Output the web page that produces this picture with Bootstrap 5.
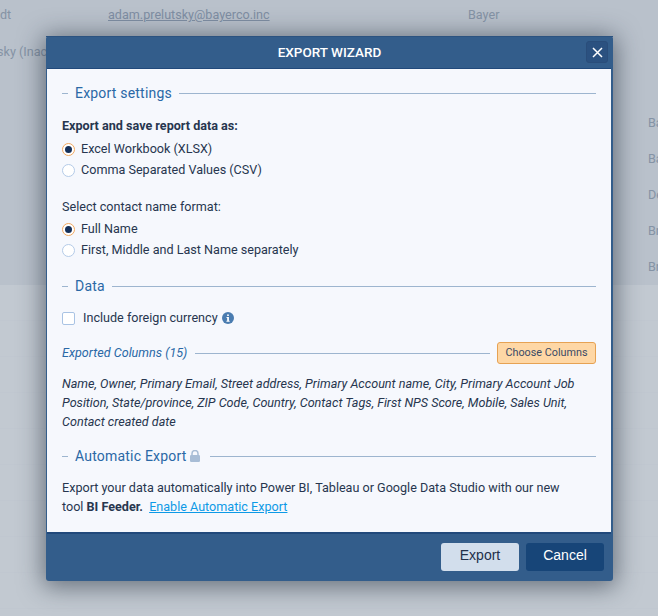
<!DOCTYPE html>
<html lang="en">
<head>
  <meta charset="UTF-8">
  <title>Export Wizard</title>
  <meta name="viewport" content="width=device-width, initial-scale=1">
  <link href="https://cdn.jsdelivr.net/npm/bootstrap@5.3.3/dist/css/bootstrap.min.css" rel="stylesheet">
  <style>
    html, body { height: 100%; }
    body { font-family: Roboto, "Liberation Sans", sans-serif; font-size: 12.6px; color: #27364f; background: #bac2cc; overflow: hidden; position: relative; }

    /* dimmed page behind the dialog */
    .page-top { height: 285px; background: #b9c1cb; color: #8593a5; position: relative; }
    .page-bottom { height: 331px; background: repeating-linear-gradient(#c2c9d1 0 35px, #c0c7d0 35px 36px); }
    .bg-text { position: absolute; line-height: 16px; white-space: nowrap; }
    .bg-text a { color: #7f8ea3; }
    .bg-email { left: 108px; top: 7px; }
    .bg-dt { left: 0; top: 7px; }
    .bg-sky { left: -3px; top: 44px; }
    .bg-bayer { left: 468px; top: 7px; }
    .bg-r1 { left: 648px; top: 115px; }
    .bg-r2 { left: 648px; top: 151px; }
    .bg-r3 { left: 648px; top: 187px; }
    .bg-r4 { left: 648px; top: 223px; }
    .bg-r5 { left: 648px; top: 259px; }

    /* dialog */
    .wizard { position: absolute; left: 46px; top: 36px; width: 567px; height: 545px; display: flex; flex-direction: column; background: #335d8b; border-radius: 3px; box-shadow: 0 3px 24px 3px rgba(30, 40, 55, .55); }
    .wizard-head { height: 32px; flex: none; position: relative; display: flex; align-items: center; justify-content: center; border-top: 1px solid #2c5380; color: #fff; font-size: 13.5px; font-weight: 500; }
    .wizard-close { position: absolute; right: 5px; top: 4px; width: 22px; height: 22px; padding: 0; display: flex; align-items: center; justify-content: center; background: #2b5180; border: 1px solid #2a4d7a; border-radius: 3px; }
    .wizard-body { flex: none; height: 466px; margin: 0 2px 0 1px; padding: 14px 15px 0 15px; background: #f6f8fd; border-top: 1px solid #21497b; border-bottom: 2px solid #21497b; }
    .wizard-foot { flex: 1; padding: 9px 9px 0 0; display: flex; justify-content: flex-end; gap: 7px; }
    .wizard-foot .btn { width: 78px; height: 28px; padding: 0 0 3px; font-size: 14px; font-family: "Liberation Sans", sans-serif; border: 0; border-radius: 3px; }
    .btn-pale { background: #d2deec; color: #22304a; }
    .btn-navy { background: #174578; color: #fff; }

    /* section legend: short dash, title, long rule */
    .legend-row { display: flex; align-items: center; color: #2a68a6; font-size: 14px; line-height: 20px; letter-spacing: .2px; }
    .legend-row::before { content: ""; width: 6px; height: 1px; background: #9db5cf; margin-right: 7px; }
    .legend-row::after { content: ""; flex: 1; height: 1px; background: #9db5cf; margin-left: 7px; }
    .legend-lock { margin: 0 3px 0 3px; }
    .gap-data { margin-top: 15px; }
    .gap-auto { margin-top: 15.5px; }

    .set-label { line-height: 16px; }
    .set-first { margin-top: 15px; }
    .set-second { margin-top: 18px; }
    .opt { display: flex; align-items: center; height: 22px; }
    .opt-first { margin-top: 5px; height: 20px; }
    .opt-second { margin-top: 4px; height: 20px; }
    .opt-dot { width: 13px; height: 13px; border-radius: 50%; border: 1px solid #b4cbe8; background: #fff; margin-right: 6px; flex: none; display: flex; align-items: center; justify-content: center; }
    .opt-dot.is-on { border-color: #f0a860; }
    .opt-dot.is-on::after { content: ""; width: 7px; height: 7px; border-radius: 50%; background: #15305a; }
    .opt-tick { margin-top: 11px; }
    .tick-box { width: 13px; height: 13px; border: 1px solid #a9c3e4; border-radius: 2px; background: #fff; margin-right: 8px; flex: none; }
    .info-dot { margin-left: 4px; }

    .cols-row { display: flex; align-items: center; height: 22px; margin-top: 13px; }
    .cols-title { font-style: italic; color: #2a68a6; }
    .cols-rule { flex: 1; height: 1px; background: #9db5cf; margin: 0 7px 0 8px; }
    .btn-choose { width: 99px; height: 22px; padding: 0; font-size: 10.8px; font-family: Roboto, sans-serif; color: #3a4a66; background: #fed7a5; border: 1px solid #e6a253; border-radius: 3px; }
    .btn-choose:hover { background: #fed7a5; border-color: #e6a253; color: #3a4a66; }
    .cols-list { font-style: italic; line-height: 19px; margin-top: 9.5px; }
    .auto-text { line-height: 19px; margin-top: 11.5px; }
    .auto-link { color: #0d9ae6; margin-left: 3px; }
  </style>
</head>
<body>

  <div class="page-top">
    <span class="bg-text bg-dt">dt</span>
    <span class="bg-text bg-email"><a href="#">adam.prelutsky@bayerco.inc</a></span>
    <span class="bg-text bg-sky">sky (Inactive)</span>
    <span class="bg-text bg-bayer">Bayer</span>
    <span class="bg-text bg-r1">Ba</span>
    <span class="bg-text bg-r2">Ba</span>
    <span class="bg-text bg-r3">De</span>
    <span class="bg-text bg-r4">Br</span>
    <span class="bg-text bg-r5">Br</span>
  </div>
  <div class="page-bottom"></div>

  <div class="wizard">
    <div class="wizard-head">
      EXPORT WIZARD
      <button type="button" class="wizard-close" aria-label="Close">
        <svg width="11" height="11" viewBox="0 0 11 11"><path d="M1 1l9 9M10 1l-9 9" stroke="#fff" stroke-width="1.5" fill="none"/></svg>
      </button>
    </div>

    <div class="wizard-body">
      <div class="legend-row">Export settings</div>

      <div class="set-label set-first fw-bold">Export and save report data as:</div>
      <div class="opt opt-first"><span class="opt-dot is-on"></span>Excel Workbook (XLSX)</div>
      <div class="opt"><span class="opt-dot"></span>Comma Separated Values (CSV)</div>

      <div class="set-label set-second">Select contact name format:</div>
      <div class="opt opt-second"><span class="opt-dot is-on"></span>Full Name</div>
      <div class="opt"><span class="opt-dot"></span>First, Middle and Last Name separately</div>

      <div class="legend-row gap-data">Data</div>

      <div class="opt opt-tick">
        <span class="tick-box"></span>Include foreign currency
        <svg class="info-dot" width="12" height="12" viewBox="0 0 13 13"><circle cx="6.5" cy="6.5" r="6.5" fill="#4a7cb0"/><rect x="5.5" y="2.4" width="2" height="2" rx="1" fill="#fff"/><path d="M4.9 5.4h2.6v4.1h.8v1H4.8v-1h.8V6.4h-.7z" fill="#fff"/></svg>
      </div>

      <div class="cols-row">
        <span class="cols-title">Exported Columns (15)</span>
        <span class="cols-rule"></span>
        <button type="button" class="btn btn-choose">Choose Columns</button>
      </div>
      <div class="cols-list">Name, Owner, Primary Email, Street address, Primary Account name, City, Primary Account Job Position, State/province, ZIP Code, Country, Contact Tags, First NPS Score, Mobile, Sales Unit, Contact created date</div>

      <div class="legend-row gap-auto">Automatic Export
        <svg class="legend-lock" width="10" height="12" viewBox="0 0 10 12"><path d="M2 5V3.5a3 3 0 0 1 6 0V5" fill="none" stroke="#a8bdd6" stroke-width="1.5"/><rect y="5" width="10" height="7" rx="1.2" fill="#a8bdd6"/></svg>
      </div>

      <div class="auto-text">Export your data automatically into Power BI, Tableau or Google Data Studio with our new<br>tool <b>BI Feeder.</b> <a class="auto-link" href="#">Enable Automatic Export</a></div>
    </div>

    <div class="wizard-foot">
      <button type="button" class="btn btn-pale">Export</button>
      <button type="button" class="btn btn-navy">Cancel</button>
    </div>
  </div>

  <script src="https://cdn.jsdelivr.net/npm/bootstrap@5.3.3/dist/js/bootstrap.bundle.min.js"></script>
</body>
</html>
